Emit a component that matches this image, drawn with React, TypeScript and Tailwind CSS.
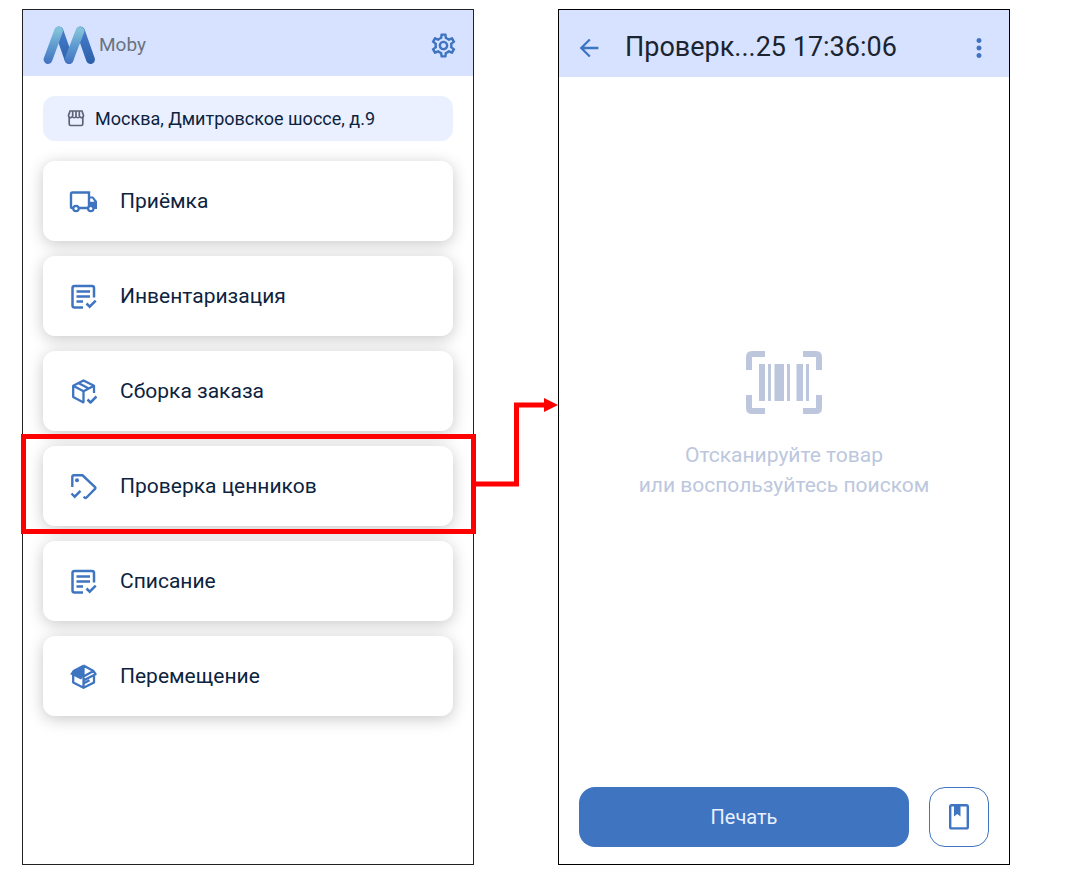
import type { ReactNode } from 'react';
import { MdArrowBack, MdMoreVert, MdOutlineSettings } from 'react-icons/md';

const Logo = () => (
  <svg width="52" height="39" viewBox="0 0 52 39" fill="none" aria-hidden="true">
    <defs>
      <linearGradient id="up" x1="0" y1="0" x2="0" y2="39" gradientUnits="userSpaceOnUse">
        <stop offset="0.1" stopColor="#82c2d8" />
        <stop offset="0.5" stopColor="#5f9bd0" />
        <stop offset="1" stopColor="#416fc0" />
      </linearGradient>
      <linearGradient id="down" x1="0" y1="0" x2="0" y2="39" gradientUnits="userSpaceOnUse">
        <stop offset="0.2" stopColor="#4379c8" />
        <stop offset="1" stopColor="#2a5fa8" />
      </linearGradient>
    </defs>
    <path d="M16 5 26 33.500M37.500 5 47.500 33.500" stroke="url(#down)" strokeWidth="8.800" strokeLinecap="round" />
    <path d="M5 33.500 15.500 5M26 33.500 37 5" stroke="url(#up)" strokeWidth="8.800" strokeLinecap="round" />
  </svg>
);

const StoreIcon = () => (
  <svg width="18" height="17" viewBox="0 0 18 17" fill="none" stroke="#5d6478" strokeWidth="1.700" aria-hidden="true">
    <path d="M3 1h12l1.500 4.500a2 2 0 0 1-3.800 1 2 2 0 0 1-3.700 0 2 2 0 0 1-3.700 0 2 2 0 0 1-3.800-1zM5.700 1v5M9 1v5M12.300 1v5M2.200 7.500V14q0 1.500 1.500 1.500h10.600q1.500 0 1.500-1.500V7.500" />
  </svg>
);

const TruckIcon = () => (
  <svg width="28" height="28" viewBox="0 0 28 28" fill="none" stroke="currentColor" strokeWidth="2.400" aria-hidden="true">
    <path d="M4 20H3q-1 0-1-1V6q0-1.500 1.500-1.500H20V20H10" />
    <path d="M19 8.500h4.500q1 0 1.500 1l3.500 4.500v7h-9.500z" fill="currentColor" stroke="none" />
    <path d="M21.200 10.500h2.100l2.100 3.200h-4.200z" fill="white" stroke="none" />
    <circle cx="7" cy="20.500" r="2.700" fill="white" strokeWidth="2.200" />
    <circle cx="21.800" cy="20.500" r="2.700" fill="white" strokeWidth="2.200" />
  </svg>
);

const DocCheckIcon = () => (
  <svg width="28" height="28" viewBox="0 0 28 28" fill="none" stroke="currentColor" strokeWidth="2.500" aria-hidden="true">
    <path d="M14 24.500H5.500q-2 0-2-2V5q0-2 2-2h17.500q2 0 2 2v9.500" />
    <path d="M7.500 8.500h13.500M7.500 13.500h13.500M7.500 18.500h6.500M17.500 20.500l3.200 3.200 6-6" />
  </svg>
);

const BoxCheckIcon = () => (
  <svg width="28" height="28" viewBox="0 0 28 28" fill="none" stroke="currentColor" strokeWidth="2.300" strokeLinejoin="round" aria-hidden="true">
    <path d="M15 24.800 4.200 19V7.700L14.500 2.500 25 7.700V15M4.200 7.700 14.500 13.200 25 7.700M14.500 13.200v11.500M9.300 5.100 19.800 10.500" />
    <path d="m18.500 21.500 3 3 6-6" strokeWidth="2.500" />
  </svg>
);

const TagCheckIcon = () => (
  <svg width="28" height="28" viewBox="0 0 28 28" fill="none" stroke="currentColor" strokeWidth="2.400" aria-hidden="true">
    <path d="M3.300 14V4q0-1.700 1.700-1.700h8.500L26 14.100q.8.900 0 1.800L17.500 24.500q-1 1-2 0l-.8-.8" />
    <path d="m2.500 20.500 3.200 3.200 5.800-5.800" />
    <circle cx="8" cy="7.300" r="2" fill="currentColor" stroke="none" />
  </svg>
);

const OpenBoxIcon = () => (
  <svg width="28" height="28" viewBox="0 0 28 28" fill="none" stroke="currentColor" strokeWidth="2.300" strokeLinejoin="round" aria-hidden="true">
    <path d="M4.200 11v8.500l10.300 5.300L25 19.500v-6.500M14.500 2.500v22M14.500 2.500 24.500 8l2 3.200-12 6.300M24.500 8l-10 5.500M15 20.200l5.500-3" />
    <path d="M14.500 1.500 4 7l-2.800 4.200 2.800 1.300 8 4 2.500-3z" fill="currentColor" stroke="none" />
  </svg>
);

const BarcodeIcon = () => (
  <svg width="76" height="63" viewBox="0 0 76 63" aria-hidden="true">
    <path d="M19 3H6Q3 3 3 6v13M57 3h13q3 0 3 3v13M3 44v13q0 3 3 3h13M73 44v13q0 3-3 3H57" fill="none" stroke="currentColor" strokeWidth="6" />
    <path d="M13 13h6v37h-6zM22 13h3v37h-3zM28.500 13h9.500v37h-9.500zM41 13h3v37h-3zM50.500 13h6.500v37h-6.500zM60 13h3v37h-3z" fill="currentColor" />
  </svg>
);

const BookmarkIcon = () => (
  <svg width="20" height="26" viewBox="0 0 20 26" fill="none" aria-hidden="true">
    <rect x="1.200" y="1.200" width="17.600" height="23.200" rx="1.500" stroke="currentColor" strokeWidth="2.400" />
    <path d="M5 1h6.500v11.500L8.250 10 5 12.500z" fill="currentColor" />
  </svg>
);

// Red frame round a menu item, with the arrow leading to the next screen
const Highlight = () => (
  <span className="pointer-events-none absolute -top-3 -right-[23px] -bottom-2 -left-[22px] z-10 border-5 border-[#ff0000]">
    <svg className="absolute -top-[41px] left-full ml-[5px]" width="82" height="94" viewBox="0 0 82 94" aria-hidden="true">
      <path d="M0 86h40.500V7H70" fill="none" stroke="#ff0000" strokeWidth="5" />
      <path d="M68 0l14 7-14 7z" fill="#ff0000" />
    </svg>
  </span>
);

type MenuItem = { name: string; icon: ReactNode; active?: boolean };

const menu: MenuItem[] = [
  { name: 'Приёмка', icon: <TruckIcon /> },
  { name: 'Инвентаризация', icon: <DocCheckIcon /> },
  { name: 'Сборка заказа', icon: <BoxCheckIcon /> },
  { name: 'Проверка ценников', icon: <TagCheckIcon />, active: true },
  { name: 'Списание', icon: <DocCheckIcon /> },
  { name: 'Перемещение', icon: <OpenBoxIcon /> },
];

function HomeScreen() {
  return (
    <section className="flex-1 min-w-0 border border-[#222222]">
      <header className="flex h-[66px] items-center bg-[#d6e2ff] pt-1 pr-[15px] pl-5">
        <Logo />
        <span className="ml-1 text-[19px] text-[#6a737f]">Moby</span>
        <button aria-label="Настройки" className="ml-auto text-[#3f74c0]">
          <MdOutlineSettings size={29} />
        </button>
      </header>
      <div className="p-5">
        <button className="flex h-[45px] w-full items-center gap-2.5 rounded-xl bg-[#eaf0ff] pl-6 text-lg text-[#0c2340]">
          <StoreIcon />
          Москва, Дмитровское шоссе, д.9
        </button>
        <nav className="mt-5 flex flex-col gap-[15px]">
          {menu.map(item => (
            <button key={item.name} className="relative flex h-20 w-full items-center rounded-xl bg-white pt-0.5 pl-[26px] text-[21px] text-[#0c2340] shadow-[0_3px_16px_rgba(0,0,0,0.22)]">
              <span className="flex w-[51px] shrink-0 text-[#3f74c0]">{item.icon}</span>
              {item.name}
              {item.active && <Highlight />}
            </button>
          ))}
        </nav>
      </div>
    </section>
  );
}

function PriceCheckScreen() {
  return (
    <section className="flex flex-1 min-w-0 flex-col border border-black">
      <header className="flex h-[67px] items-center bg-[#d6e2ff] pt-2 pr-[15px] pl-4">
        <button aria-label="Назад" className="text-[#3f74c0]"><MdArrowBack size={28} /></button>
        <h1 className="ml-[22px] text-[27px] text-[#1b2430]">Проверк...25 17:36:06</h1>
        <button aria-label="Меню" className="ml-auto text-[#3f74c0]"><MdMoreVert size={30} /></button>
      </header>
      <div className="flex flex-1 flex-col items-center justify-center pb-3.5 text-[#bcc7de]">
        <BarcodeIcon />
        <p className="mt-[26px] text-center text-[21px] leading-[30px]">
          Отсканируйте товар<br />или воспользуйтесь поиском
        </p>
      </div>
      <footer className="flex gap-5 px-5 pb-[17px]">
        <button className="h-[60px] flex-1 rounded-2xl bg-[#3f74c0] text-xl text-[#eaf0ff]">Печать</button>
        <button aria-label="Закладка" className="flex size-[60px] items-center justify-center rounded-2xl border border-[#3f74c0] text-[#3f74c0]">
          <BookmarkIcon />
        </button>
      </footer>
    </section>
  );
}

export default function App() {
  return (
    <main className="flex min-h-screen gap-[84px] bg-white pt-[9px] pr-[67px] pb-[22px] pl-[22px] font-['Roboto','Liberation_Sans',sans-serif]">
      <HomeScreen />
      <PriceCheckScreen />
    </main>
  );
}
